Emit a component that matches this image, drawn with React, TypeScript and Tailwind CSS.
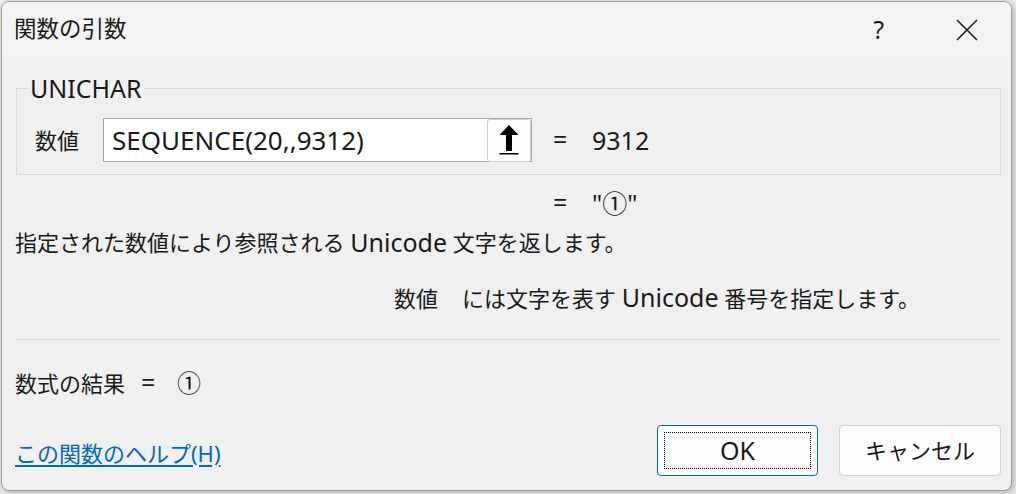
import React from 'react';

const font = { fontFamily: '"Noto Sans", "Noto Sans CJK JP", sans-serif' };

const UpArrow = () => (
  <svg width="20" height="32" viewBox="0 0 20 32" className="block">
    <path d="M10 1 L19.5 11 L13 11 L13 27 L7 27 L7 11 L0.5 11 Z" fill="#000" />
    <rect x="0.5" y="29" width="19" height="1.5" fill="#000" />
  </svg>
);

const CloseIcon = () => (
  <svg width="22" height="22" viewBox="0 0 22 22" className="block">
    <path d="M1 1 L21 21 M21 1 L1 21" stroke="#1a1a1a" strokeWidth="1.6" />
  </svg>
);

// Latin runs are drawn a little larger than the kana/kanji, as in the Windows UI font
const L: React.FC<{ children: React.ReactNode }> = ({ children }) => (
  <span className="text-[25px] leading-none">{children}</span>
);

const App: React.FC = () => {
  return (
    <div className="w-[1016px] h-[494px] bg-[#ececec] pl-[1px] pt-[1px] overflow-hidden text-[#1a1a1a]" style={font}>
      <div className="w-[1011px] h-[490px] border border-[#9a9a9a] rounded-[8px] overflow-hidden bg-[#f0f0f0] shadow-[2px_2px_6px_rgba(0,0,0,0.25)] flex flex-col">
        {/* Title bar */}
        <div className="h-[55px] shrink-0 bg-[#f3f3f3] flex items-center pl-[12px]">
          <span className="text-[22.5px] leading-none">関数の引数</span>
          <span className="ml-auto text-[25px] leading-none mr-[72px]">?</span>
          <div className="mr-[33px]"><CloseIcon /></div>
        </div>

        <div className="flex-1 pl-[14px] pr-[10px] text-[22px]">
          {/* Group box */}
          <div className="relative mt-[31px] h-[87px] border border-[#dadada] pt-[29px] pl-[18px]">
            <span className="absolute left-[11px] top-[-15px] px-[2px] bg-[#f0f0f0] leading-[28px] text-[25px]">UNICHAR</span>
            <div className="flex items-center h-[44px]">
              <span className="w-[68px]">数値</span>
              <div className="w-[429px] h-[44px] bg-white border border-[#a6a6a6] flex items-center pl-[8px]">
                <span className="flex-1 text-[26px] leading-none">SEQUENCE(20,,9312)</span>
                <div className="w-[44px] h-[43px] border border-[#cfcfcf] rounded-[3px] bg-[#fdfdfd] flex items-center justify-center">
                  <UpArrow />
                </div>
              </div>
              <span className="ml-[21px] w-[39px]"><L>=</L></span>
              <L>9312</L>
            </div>
          </div>

          <div className="h-[56px] flex items-center pl-[537px]">
            <span className="w-[39px]"><L>=</L></span>
            <L>"①"</L>
          </div>

          <div className="h-[22px] flex items-center -ml-[1px] whitespace-pre">
            指定された数値により参照される <L>Unicode</L> 文字を返します。
          </div>

          <div className="mt-[31px] h-[28px] flex items-center pl-[378px] whitespace-pre">
            <span className="w-[68px]">数値</span>
            <span>には文字を表す <L>Unicode</L> 番号を指定します。</span>
          </div>

          <div className="mt-[27px] h-px bg-[#dcdcdc]" />

          <div className="mt-[29px] h-[28px] flex items-center -ml-[1px]">
            <span>数式の結果</span>
            <span className="ml-[16px] w-[36px]"><L>=</L></span>
            <span className="text-[24px] leading-none">①</span>
          </div>

          <div className="mt-[28px] h-[51px] flex items-center">
            <a href="#" className="-ml-[1px] pt-[5px] text-[#0067c0] underline underline-offset-[3px]">この関数のヘルプ(H)</a>
            <button className="ml-auto w-[161px] h-[51px] rounded-[4px] border border-[#0067c0] bg-[#fdfdfd] p-[6px]">
              <div className="w-full h-full border border-dotted border-black flex items-center justify-center"><L>OK</L></div>
            </button>
            <button className="ml-[21px] w-[162px] h-[51px] rounded-[4px] border border-[#d0d0d0] bg-[#fdfdfd] flex items-center justify-center">
              キャンセル
            </button>
          </div>
        </div>
      </div>
    </div>
  );
};

export default App;
